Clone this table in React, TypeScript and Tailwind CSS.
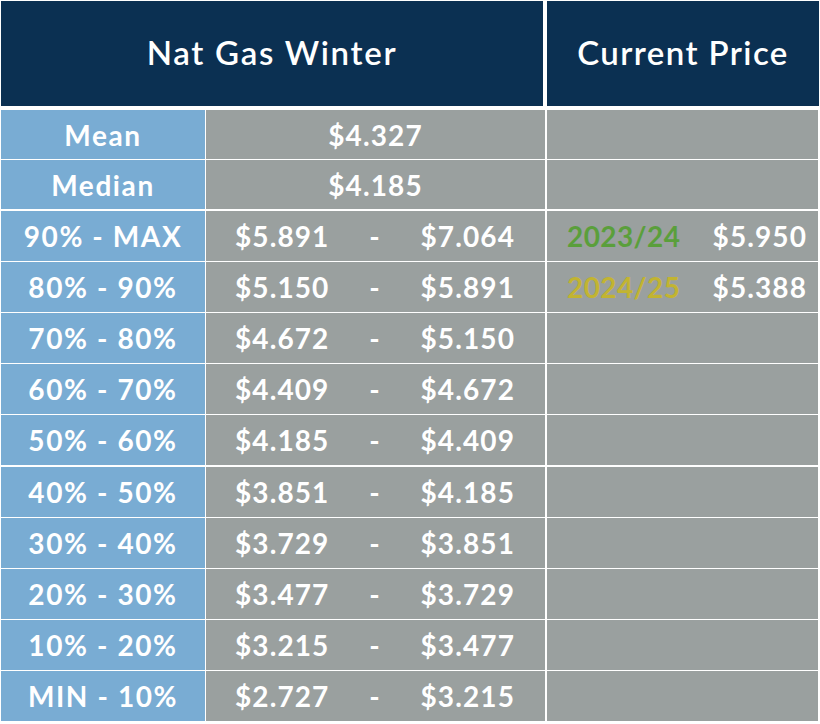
import React from "react";

const rows: { label: string; lo: string; hi: string; year?: string; yearColor?: string; price?: string; gapTop: string }[] = [
  { label: "90% - MAX", lo: "$5.891", hi: "$7.064", year: "2023/24", yearColor: "text-[#5a9f3b]", price: "$5.950", gapTop: "mt-[2px]" },
  { label: "80% - 90%", lo: "$5.150", hi: "$5.891", year: "2024/25", yearColor: "text-[#c2b431]", price: "$5.388", gapTop: "mt-px" },
  { label: "70% - 80%", lo: "$4.672", hi: "$5.150", gapTop: "mt-px" },
  { label: "60% - 70%", lo: "$4.409", hi: "$4.672", gapTop: "mt-px" },
  { label: "50% - 60%", lo: "$4.185", hi: "$4.409", gapTop: "mt-px" },
  { label: "40% - 50%", lo: "$3.851", hi: "$4.185", gapTop: "mt-[2px]" },
  { label: "30% - 40%", lo: "$3.729", hi: "$3.851", gapTop: "mt-px" },
  { label: "20% - 30%", lo: "$3.477", hi: "$3.729", gapTop: "mt-px" },
  { label: "10% - 20%", lo: "$3.215", hi: "$3.477", gapTop: "mt-px" },
  { label: "MIN - 10%", lo: "$2.727", hi: "$3.215", gapTop: "mt-px" },
];

export default function App() {
  return (
    <div className="w-[820px] h-[724px] bg-white pl-px pt-px text-white font-['Lato','Noto_Sans',sans-serif] overflow-hidden">
      <div className="flex">
        <div className="w-[542px] h-[105px] bg-[#0b3052] flex items-center justify-center text-[33px] font-semibold tracking-[1.7px] pb-[2px]">
          Nat Gas Winter
        </div>
        <div className="ml-[4px] w-[272px] h-[105px] bg-[#0b3052] flex items-center justify-center text-[33px] font-semibold tracking-[1.4px] pb-[2px]">
          Current Price
        </div>
      </div>

      <div className="mt-[4px] flex h-[49px] text-[28px] font-bold">
        <div className="w-[204px] bg-[#79acd3] flex items-center justify-center tracking-[1.6px]">Mean</div>
        <div className="ml-px w-[339px] bg-[#9aa09f] flex items-center justify-center tracking-[1.1px]">$4.327</div>
        <div className="ml-[2px] w-[271px] bg-[#9aa09f]"></div>
      </div>
      <div className="mt-px flex h-[49px] text-[28px] font-bold">
        <div className="w-[204px] bg-[#79acd3] flex items-center justify-center tracking-[1.6px]">Median</div>
        <div className="ml-px w-[339px] bg-[#9aa09f] flex items-center justify-center tracking-[1.1px]">$4.185</div>
        <div className="ml-[2px] w-[271px] bg-[#9aa09f]"></div>
      </div>

      {rows.map((r) => (
        <div key={r.label} className={`${r.gapTop} flex h-[50px] text-[28px] font-bold`}>
          <div className="w-[204px] bg-[#79acd3] flex items-center justify-center tracking-[1.6px]">{r.label}</div>
          <div className="ml-px w-[339px] bg-[#9aa09f] flex items-center justify-between pl-[29px] pr-[30px] tracking-[1.1px]">
            <span>{r.lo}</span>
            <span>-</span>
            <span>{r.hi}</span>
          </div>
          <div className="ml-[2px] w-[271px] bg-[#9aa09f] flex items-center justify-between pl-[20px] pr-[11px]">
            {r.year ? <span className={`${r.yearColor} tracking-[0.4px]`}>{r.year}</span> : null}
            {r.price ? <span className="tracking-[1.1px]">{r.price}</span> : null}
          </div>
        </div>
      ))}
    </div>
  );
}
